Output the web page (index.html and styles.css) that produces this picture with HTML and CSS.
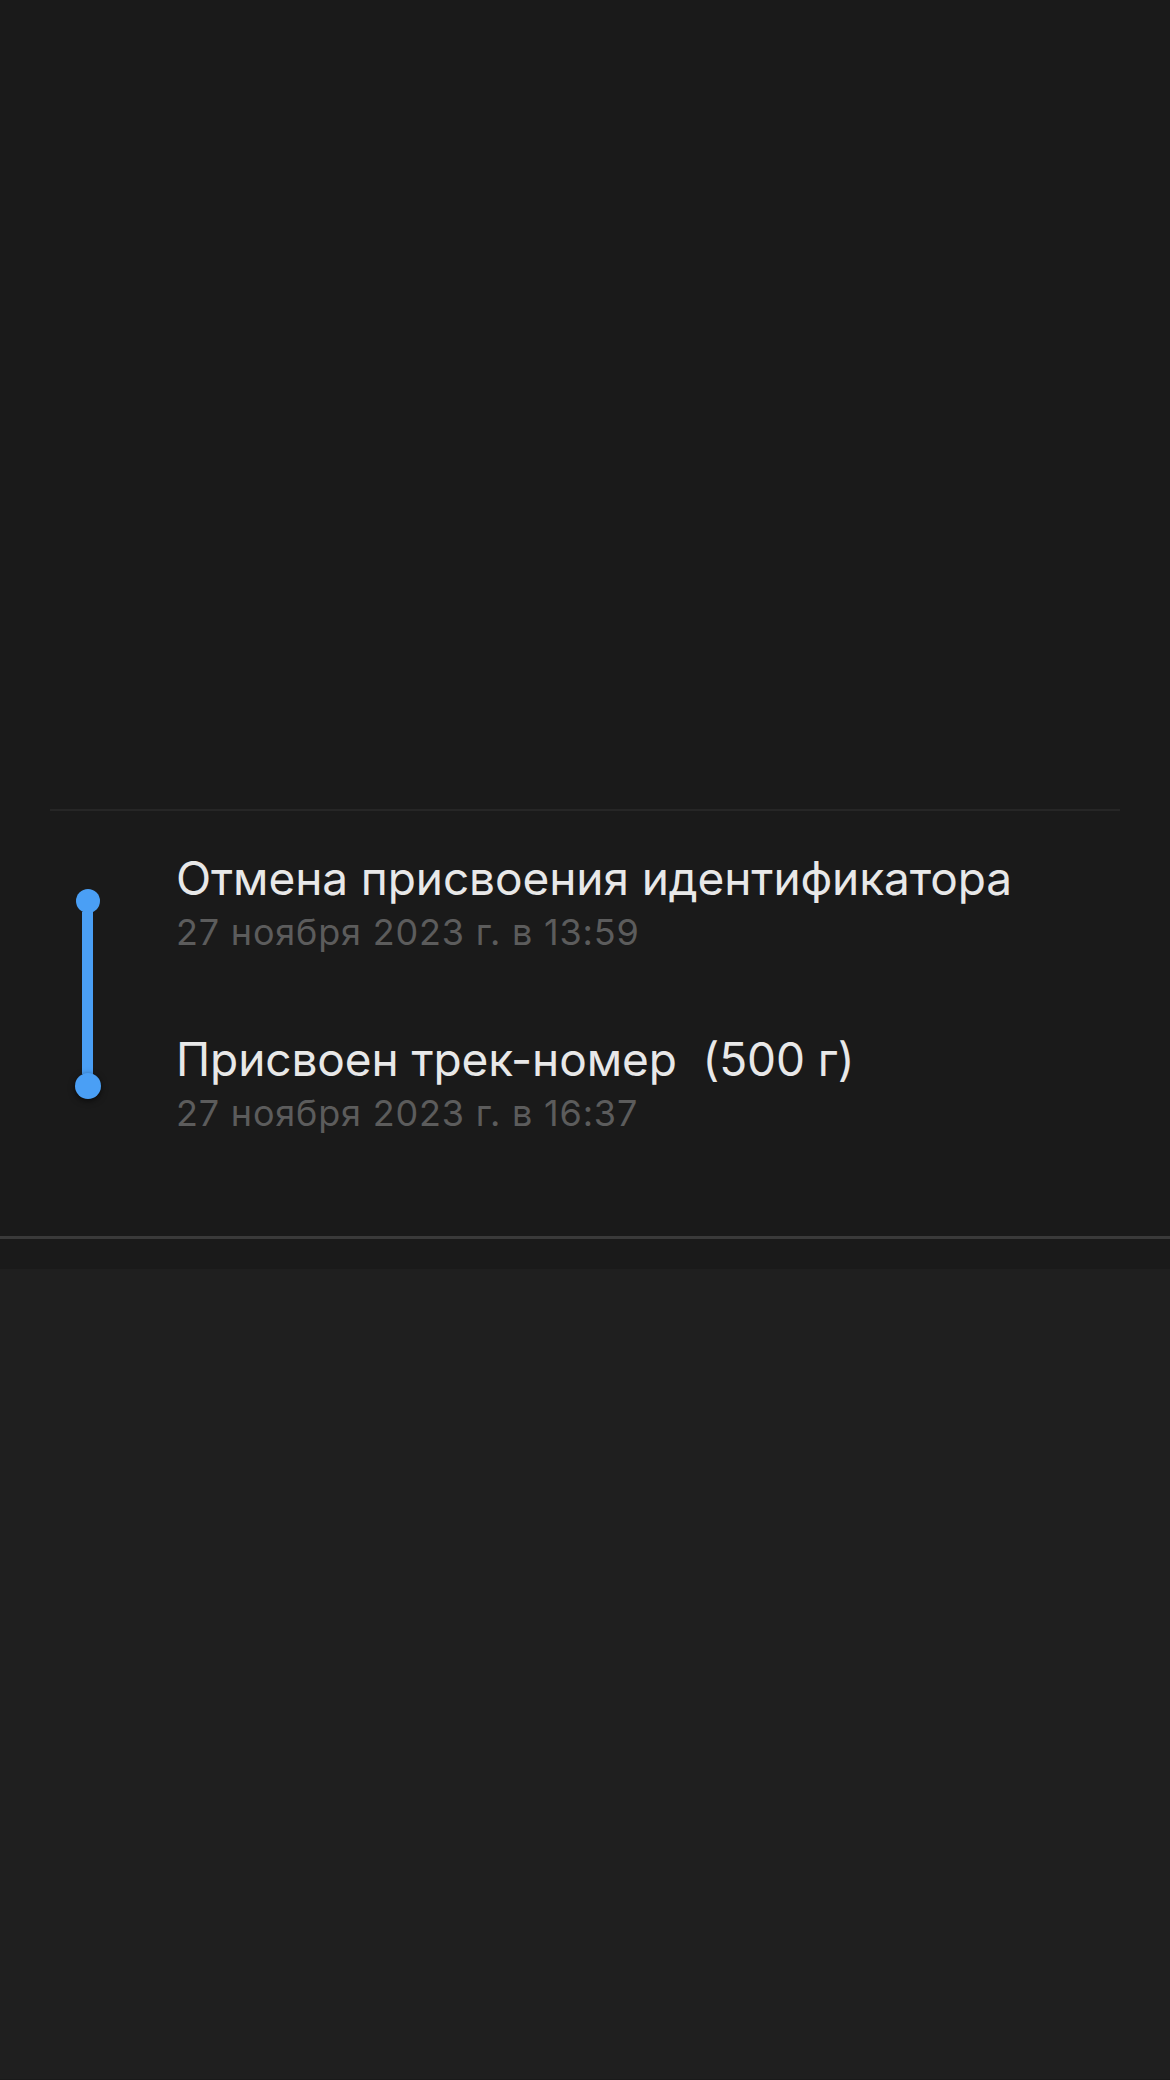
FILE: index.html
```html
<!DOCTYPE html>
<html lang="ru">
<head>
    <meta charset="UTF-8">
    <meta name="viewport" content="width=device-width, initial-scale=1.0">
    <title>История отправления</title>
    <link rel="stylesheet" href="styles.css">
</head>
<body>
    <div class="top-space"></div>

    <!-- История статусов отправления -->
    <section class="history">
        <div class="divider"></div>
        <div class="timeline">
            <div class="rail">
                <span class="dot"></span>
                <span class="line"></span>
                <span class="dot dot-last"></span>
            </div>
            <div class="events">
                <div class="event">
                    <div class="event-title">Отмена присвоения идентификатора</div>
                    <div class="event-date">27 ноября 2023 г. в 13:59</div>
                </div>
                <div class="event">
                    <div class="event-title">Присвоен трек-номер&nbsp; (500 г)</div>
                    <div class="event-date">27 ноября 2023 г. в 16:37</div>
                </div>
            </div>
        </div>
    </section>

    <div class="gap"></div>
    <div class="bottom-area"></div>
</body>
</html>
```

FILE: styles.css
```css
body {
    margin: 0;
    padding: 0;
    background-color: #1a1a1a;
    font-family: Inter, "Noto Sans", sans-serif;
    color: #e6e6e6;
}
.top-space {
    height: 809px;
}
.divider {
    height: 2px;
    margin: 0 50px;
    background-color: #262626;
}
.history {
    border-bottom: 3px solid #3a3a3a;
}
.timeline {
    display: flex;
    padding: 40px 0 101px 0;
}
.rail {
    width: 175px;
    flex-shrink: 0;
    display: flex;
    flex-direction: column;
    align-items: center;
    padding-top: 38px;
}
.dot {
    width: 24px;
    height: 24px;
    border-radius: 50%;
    background-color: #4a9ff5;
}
.dot-last {
    width: 26px;
    height: 26px;
    box-shadow: 0 2px 6px rgba(0, 0, 0, 0.6);
}
.line {
    width: 11px;
    height: 162px;
    margin: -1px 0;
    background-color: #4a9ff5;
}
.events {
    display: flex;
    flex-direction: column;
    gap: 78px;
    padding-left: 1px;
}
.event-title {
    font-size: 46px;
    line-height: 54px;
    letter-spacing: -0.1px;
    color: #e8e8e8;
}
.event-date {
    margin-top: 5px;
    font-size: 36px;
    line-height: 44px;
    letter-spacing: 0.8px;
    color: #5c5c5c;
}
.gap {
    height: 30px;
}
.bottom-area {
    height: 810px;
    background-color: #1f1f1f;
}
```
